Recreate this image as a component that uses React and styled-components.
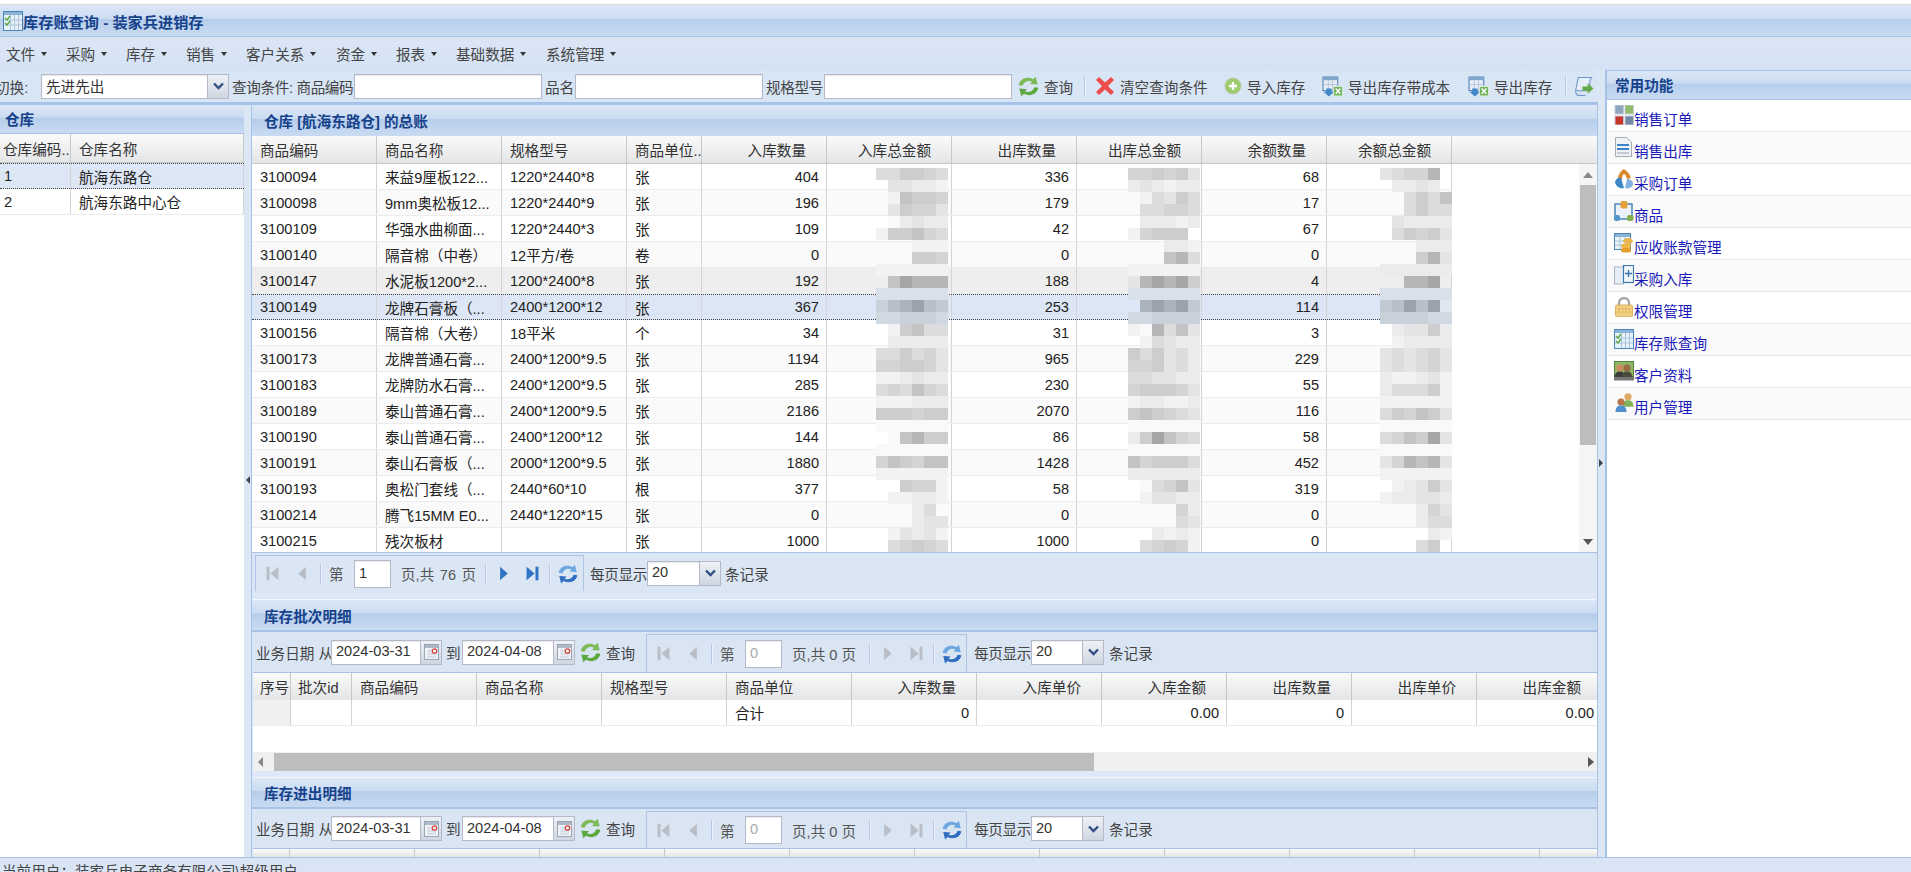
import React from 'react';
import styled, { createGlobalStyle, css } from 'styled-components';

const GlobalStyle = createGlobalStyle`
  html, body { margin: 0; padding: 0; background: #fff; overflow: hidden; }
  body {
    font-family: "Liberation Sans", "Noto Sans CJK SC", sans-serif;
    font-size: 14.6px;
    color: #333;
  }
  * { box-sizing: border-box; }
`;

// ExtJS blue theme band used by every panel title
const band = css`
  background: linear-gradient(#dbe7f6 0%, #cbdcf2 44%, #b6cdeb 46%, #c9dbf1 100%);
`;

const Page = styled.div`
  width: 1911px;
  height: 872px;
  display: flex;
  flex-direction: column;
  overflow: hidden;
`;

const TopStrip = styled.div`
  height: 5px;
  border-bottom: 1px solid #dcdcdc;
`;

const TitleBar = styled.div`
  height: 32px;
  ${band}
  border-bottom: 1px solid #a6c3e6;
  display: flex;
  align-items: center;
  padding-left: 3px;
  gap: 0;
  color: #15428b;
  font-weight: bold;
  font-size: 15.2px;
`;

const MenuBar = styled.div`
  height: 33px;
  display: flex;
  align-items: center;
  padding-left: 6px;
  background: linear-gradient(#dbe6f5, #d4e2f4);
`;

const MenuItem = styled.div`
  width: ${({ $w }) => $w}px;
  display: flex;
  align-items: center;
  color: #444;
  white-space: nowrap;
  &::after {
    content: '';
    margin-left: 6px;
    border: 3px solid transparent;
    border-top: 4px solid #333;
    border-bottom: 0;
  }
`;

const Main = styled.div`
  flex: 1;
  min-height: 0;
  display: flex;
`;

const Workspace = styled.div`
  width: 1598px;
  display: flex;
  flex-direction: column;
  min-height: 0;
`;

const TopToolbar = styled.div`
  height: 35px;
  flex: none;
  display: flex;
  align-items: center;
  padding-bottom: 3px;
  overflow: hidden;
  background: linear-gradient(#d8e5f5 0, #d8e5f5 32px, #a6c2e8 32px);
`;

const Text = styled.span`
  flex: none;
  width: ${({ $w }) => ($w ? `${$w}px` : 'auto')};
  margin-left: ${({ $ml }) => $ml || 0}px;
  color: ${({ $muted }) => ($muted ? '#555' : '#444')};
  letter-spacing: ${({ $tight }) => ($tight ? '-0.35px' : 'normal')};
  word-spacing: ${({ $ws }) => $ws || 0}px;
  white-space: nowrap;
`;

const Field = styled.div`
  flex: none;
  width: ${({ $w }) => $w}px;
  height: ${({ $h }) => $h || 25}px;
  margin-left: ${({ $ml }) => $ml || 0}px;
  display: flex;
  background: #fff;
  border: 1px solid #b5b8c8;
  box-shadow: inset 0 1px 1px #e8e8e8;
`;

const FieldInput = styled.input`
  flex: 1;
  min-width: 0;
  height: 100%;
  border: 0;
  background: transparent;
  padding: 0 0 2px 4px;
  font: inherit;
  color: ${({ disabled }) => (disabled ? '#aaa' : '#333')};
  outline: none;
`;

const Trigger = styled.div`
  flex: none;
  width: 21px;
  display: flex;
  align-items: center;
  justify-content: center;
  background: linear-gradient(#eef1f6, #cfd6e1);
  border-left: 1px solid #b5b8c8;
`;

const ToolButton = styled.div`
  flex: none;
  width: ${({ $w }) => $w}px;
  margin-left: ${({ $ml }) => $ml || 0}px;
  display: flex;
  align-items: center;
  gap: 5px;
  color: #444;
  white-space: nowrap;
`;

const Sep = styled.i`
  flex: none;
  width: 1px;
  height: ${({ $h }) => $h || 20}px;
  margin-left: ${({ $ml }) => $ml || 0}px;
  background: #b3c9e6;
  box-shadow: 1px 0 0 #eaf1fa;
`;

const Body = styled.div`
  flex: 1;
  min-height: 0;
  display: flex;
`;

const West = styled.div`
  width: 244px;
  flex: none;
  display: flex;
  flex-direction: column;
  background: #fff;
`;

const Splitter = styled.div`
  flex: none;
  width: ${({ $w }) => $w}px;
  position: relative;
  background: #dce7f6;
  border-right: ${({ $edge }) => ($edge ? '1px solid #a6c2e8' : '0')};
`;

const SplitArrow = styled.div`
  position: absolute;
  left: ${({ $left }) => $left}px;
  top: ${({ $top }) => $top}px;
  border: 4px solid transparent;
  ${({ $dir }) => ($dir === 'left'
    ? 'border-right: 4px solid #444; border-left: 0;'
    : 'border-left: 4px solid #444; border-right: 0;')}
`;

const PanelTitle = styled.div`
  flex: none;
  height: ${({ $h }) => $h}px;
  ${band}
  display: flex;
  align-items: center;
  padding-left: ${({ $pl }) => $pl}px;
  padding-bottom: ${({ $pb }) => $pb || 0}px;
  color: #15428b;
  font-weight: bold;
  border-bottom: ${({ $line }) => $line || 0}px solid #a8c2e6;
  border-top: ${({ $top }) => ($top ? '1px solid #f4f7fc' : '0')};
`;

const Center = styled.div`
  flex: 1;
  min-width: 0;
  display: flex;
  flex-direction: column;
  overflow: hidden;
  background: #dce7f6;
  border-right: 1px solid #a8c2e6;
`;

const GridHead = styled.div`
  flex: none;
  height: ${({ $h }) => $h}px;
  display: flex;
  overflow: hidden;
  background: linear-gradient(#fafafa, #e4e5e7);
  border-bottom: ${({ $flat }) => ($flat ? 0 : '1px solid #c8c8c8')};
`;

const HeadCell = styled.div`
  flex: none;
  width: ${({ $w }) => $w}px;
  display: flex;
  align-items: center;
  justify-content: ${({ $right }) => ($right ? 'flex-end' : 'flex-start')};
  padding: 0 ${({ $right }) => ($right ? 20 : 0)}px 0 ${({ $pl }) => $pl || 8}px;
  border-right: 1px solid #c8c8c8;
  white-space: nowrap;
  overflow: hidden;
  color: #333;
`;

const TableArea = styled.div`
  flex: none;
  height: 388px;
  display: flex;
  background: #fff;
`;

const Rows = styled.div`
  flex: 1;
  min-width: 0;
  position: relative;
  overflow: hidden;
`;

const Row = styled.div`
  height: 26px;
  display: flex;
  width: ${({ $w }) => ($w ? `${$w}px` : 'auto')};
  background: ${({ $state, $alt }) => {
    if ($state === 'selected') return '#dce6f5';
    if ($state === 'hover') return '#eeeeee';
    return $alt ? '#fafafa' : '#fff';
  }};
  border-bottom: ${({ $state }) => ($state === 'selected' ? '1px dotted #444' : '1px solid #ececec')};
  border-top: ${({ $state }) => ($state === 'selected' ? '1px dotted #444' : '0')};
`;

const Cell = styled.div`
  flex: none;
  width: ${({ $w }) => $w}px;
  display: flex;
  align-items: center;
  justify-content: ${({ $right }) => ($right ? 'flex-end' : 'flex-start')};
  padding: 0 ${({ $right }) => ($right ? 7 : 0)}px 0 ${({ $pl }) => $pl || 8}px;
  border-right: 1px solid #d4d4d4;
  background: ${({ $gutter }) => ($gutter ? '#f0f0f0' : 'transparent')};
  color: #222;
  white-space: nowrap;
  overflow: hidden;
`;

const MosaicSvg = styled.svg`
  position: absolute;
  top: 4px;
  left: ${({ $left }) => $left}px;
`;

const VScroll = styled.div`
  flex: none;
  width: 18px;
  display: flex;
  flex-direction: column;
  align-items: center;
  background: #f5f5f5;
`;

const ScrollEnd = styled.div`
  flex: ${({ $fill }) => ($fill ? 1 : 'none')};
  height: 21px;
  display: flex;
  align-items: ${({ $fill }) => ($fill ? 'flex-end' : 'center')};
  justify-content: center;
  padding-bottom: ${({ $fill }) => ($fill ? '7px' : 0)};
`;

const Thumb = styled.div`
  flex: none;
  width: 16px;
  height: 260px;
  background: #bdbdbd;
`;

const Triangle = styled.i`
  border: 5px solid transparent;
  ${({ $dir }) => ({
    up: 'border-bottom: 6px solid #888; border-top: 0;',
    down: 'border-top: 6px solid #555; border-bottom: 0;',
    left: 'border-right: 5px solid #888; border-left: 0;',
    right: 'border-left: 6px solid #555; border-right: 0;',
  }[$dir])}
`;

const PagerBar = styled.div`
  flex: none;
  height: 41px;
  display: flex;
  align-items: center;
  padding: 0 0 0 3px;
  border-top: 1px solid #a8c2e6;
  background: #dbe6f5;
`;

const LowerSection = styled.div`
  flex: none;
  display: flex;
  flex-direction: column;
  padding-left: 1px;
`;

const SectionGap = styled.div`
  flex: none;
  height: ${({ $h }) => $h}px;
  background: #dfe8f6;
`;

const FilterBar = styled.div`
  flex: none;
  height: ${({ $h }) => $h}px;
  display: flex;
  align-items: center;
  padding-left: 3px;
  background: #dae5f4;
  border-bottom: 1px solid #a8c2e6;
`;

const PagerBox = styled.div`
  flex: none;
  align-self: flex-end;
  width: ${({ $w }) => $w}px;
  height: ${({ $h }) => $h}px;
  margin-left: ${({ $ml }) => $ml || 0}px;
  margin-bottom: ${({ $mb }) => $mb || 0}px;
  display: flex;
  align-items: center;
  padding-left: 4px;
  border: 1px solid #aec5e3;
  border-bottom: 0;
`;

const PagerBtn = styled.div`
  flex: none;
  width: 24px;
  margin-left: ${({ $ml }) => $ml || 0}px;
  display: flex;
  justify-content: center;
`;

const EmptyRow = styled.div`
  flex: none;
  height: 26px;
  background: #fff;
`;

const HScroll = styled.div`
  flex: none;
  height: 19px;
  display: flex;
  align-items: center;
  background: #f0f0f0;
  padding: 0 3px 0 5px;
`;

const HThumb = styled.div`
  width: 820px;
  height: 18px;
  margin-left: 11px;
  margin-right: auto;
  background: #bdbdbd;
`;

const EastSplit = styled(Splitter)`
  background: #dce7f6;
`;

const East = styled.div`
  flex: 1;
  min-width: 0;
  display: flex;
  flex-direction: column;
  background: #fff;
  border-left: 2px solid #a6c2e8;
  border-top: 1px solid #a6c2e8;
`;

const EastList = styled.div`
  display: flex;
  flex-direction: column;
`;

const EastItem = styled.div`
  height: 32px;
  display: flex;
  align-items: flex-start;
  padding: 5px 0 0 7px;
  background: ${({ $alt }) => ($alt ? '#f9f9f9' : '#fff')};
  border-bottom: 1px solid #e8e8e8;
`;

const EastLabel = styled.span`
  margin-top: 5px;
  color: #1a1ab8;
  line-height: 20px;
`;

const StatusBar = styled.div`
  flex: none;
  height: 15px;
  border-top: 1px solid #a6c2e8;
  background: #d9e5f5;
  padding: 5px 0 0 2px;
  line-height: 18px;
  overflow: hidden;
  color: #444;
  white-space: nowrap;
`;

/* --- icons --- */

const Svg = ({ size = 20, h, box = '0 0 20 20', children }) => (
  <svg width={size} height={h || size} viewBox={box} style={{ flex: 'none', display: 'block' }}>
    {children}
  </svg>
);

const ChevronDown = () => (
  <svg width="11" height="8" viewBox="0 0 11 8">
    <path d="M1 1.5 L5.5 6 L10 1.5" fill="none" stroke="#2f4f86" strokeWidth="2.4" />
  </svg>
);

const CalendarIcon = () => (
  <svg width="15" height="16" viewBox="0 0 15 16">
    <rect x="0.5" y="0.5" width="14" height="15" fill="#f1f3f6" stroke="#9aa5b5" />
    <rect x="1" y="1" width="13" height="3" fill="#aeb9c8" />
    <path d="M3 7h9M3 10h9M3 13h9M5 5v9M8 5v9M11 5v9" stroke="#cdd4de" />
    <circle cx="10.5" cy="7" r="2.2" fill="#fff" stroke="#d0443c" strokeWidth="1.3" />
  </svg>
);

const RefreshGreen = () => (
  <Svg size={21} box="2.5 2 15 16">
    <path d="M2.5 9 C3.5 4 9 2 13.5 4.5 L15.5 2.5 L17 8.5 L11 8 L12.8 6.3 C9.5 5 6.5 6.5 5.5 9.5 Z" fill="#7dbb58" />
    <path d="M17.5 11 C16.5 16 11 18 6.5 15.5 L4.5 17.5 L3 11.5 L9 12 L7.2 13.7 C10.5 15 13.5 13.5 14.5 10.5 Z" fill="#5da83f" />
  </Svg>
);

const RefreshBlue = () => (
  <Svg size={20} box="2.5 2 15 16">
    <path d="M2.5 9 C3.5 4 9 2 13.5 4.5 L15.5 2.5 L17 8.5 L11 8 L12.8 6.3 C9.5 5 6.5 6.5 5.5 9.5 Z" fill="#6ea6e0" />
    <path d="M17.5 11 C16.5 16 11 18 6.5 15.5 L4.5 17.5 L3 11.5 L9 12 L7.2 13.7 C10.5 15 13.5 13.5 14.5 10.5 Z" fill="#2f6fbd" />
  </Svg>
);

const RedCross = () => (
  <Svg size={20}>
    <path d="M1 4 L4 1 L10 6.5 L16 1 L19 4 L13 10 L19 16 L16 19 L10 13.5 L4 19 L1 16 L7 10 Z" fill="#ec4d4a" />
  </Svg>
);

const GreenPlus = () => (
  <Svg size={18}>
    <circle cx="10" cy="10" r="9" fill="#9ccb6c" stroke="#c4c8b8" />
    <path d="M10 5.5 v9 M5.5 10 h9" stroke="#fff" strokeWidth="2.6" />
  </Svg>
);

const ExportIcon = () => (
  <Svg size={21}>
    <rect x="1" y="1" width="14" height="13" fill="#e9eef6" stroke="#4a7fb5" />
    <rect x="1" y="1" width="14" height="3" fill="#7fa6cf" />
    <path d="M1 8h14M6 4v10M10 4v10" stroke="#b5c8de" />
    <path d="M4 12 h5 v3 h2.5 l-5 4.5 l-5 -4.5 h2.5 Z" fill="#3f87c9" />
    <rect x="11" y="10" width="8.5" height="9" fill="#6db25a" stroke="#d8ead0" />
    <path d="M13 12 l4.5 5 M17.5 12 l-4.5 5" stroke="#fff" strokeWidth="1.4" />
  </Svg>
);

const DocArrow = () => (
  <Svg size={21}>
    <path d="M5 1.5 H17.5 L16 5 V14 H2.5 Z" fill="#e6eef8" stroke="#6f97c4" />
    <path d="M2.5 14 C2.5 17 4 18.5 6 18.5 H12" fill="#cfdff2" stroke="#6f97c4" />
    <path d="M9 10 h5 v-3 l5.5 5 l-5.5 5 v-3 h-5 Z" fill="#62ab48" />
  </Svg>
);

const PagerIcon = ({ kind, on }) => {
  const fill = on ? '#2f74c4' : '#b9bec6';
  const shape = {
    first: <><rect x="3" y="2" width="3.5" height="16" fill={fill} /><path d="M17 2 V18 L7.5 10 Z" fill={fill} /></>,
    prev: <path d="M14 2 V18 L5 10 Z" fill={fill} />,
    next: <path d="M6 2 V18 L15 10 Z" fill={fill} />,
    last: <><rect x="13.5" y="2" width="3.5" height="16" fill={fill} /><path d="M3 2 V18 L12.5 10 Z" fill={fill} /></>,
  }[kind];
  return <Svg size={17}>{shape}</Svg>;
};

const GridCheck = () => (
  <Svg>
    <rect x="0.5" y="0.5" width="19" height="19" fill="#e8f0f8" stroke="#4a86b8" />
    <rect x="1" y="1" width="18" height="3" fill="#8cb4d6" />
    <path d="M7.5 4v15M11.5 4v15M15.5 4v15M1 9h18M1 14h18" stroke="#a9c5de" />
    <path d="M2 7l2 2 3-4M2 12l2 2 3-4" fill="none" stroke="#5aa43c" strokeWidth="1.3" />
  </Svg>
);

const Person = ({ x, y, skin, shirt }) => (
  <g>
    <circle cx={x} cy={y} r="3.6" fill={skin} />
    <path d={`M${x - 5.5} ${y + 10} C${x - 5.5} ${y + 5} ${x - 3} ${y + 3.5} ${x} ${y + 3.5} C${x + 3} ${y + 3.5} ${x + 5.5} ${y + 5} ${x + 5.5} ${y + 10} Z`} fill={shirt} />
  </g>
);

const eastIcons = {
  squares: (
    <Svg>
      <rect x="1" y="0" width="8.5" height="9" fill="#8ea6c0" stroke="#c5ccd6" />
      <rect x="11" y="0" width="8.5" height="9" fill="#8fbb6a" stroke="#c5ccd6" />
      <rect x="1" y="11" width="8.5" height="9" fill="#c9332a" stroke="#c5ccd6" />
      <rect x="11" y="11" width="8.5" height="9" fill="#7189a6" stroke="#c5ccd6" />
    </Svg>
  ),
  doc: (
    <Svg>
      <path d="M1.5 0.5 H12.5 L17.5 5 V19.5 H1.5 Z" fill="#eef1f5" stroke="#a5acb8" />
      <rect x="3" y="7" width="12" height="2" fill="#3c83c9" />
      <rect x="3" y="11" width="12" height="2" fill="#3c83c9" />
      <path d="M3 16h12" stroke="#b5bac4" strokeWidth="1.5" />
    </Svg>
  ),
  cycle: (
    <Svg>
      <path d="M4 10 C4 5 7 2 10 0 C13 2 16 5 17 9 L13 10 C12 7 11 5 10 5 C9 5 8 7 8 11 Z" fill="#d98a2e" />
      <path d="M1 13 C2 9 5 8 7 9 L10 19 C6 20 2 18 1 13 Z" fill="#3f86c6" />
      <path d="M11 19 L13 10 C16 10 19 12 19 15 C19 18 15 20 11 19 Z" fill="#7fb2de" />
    </Svg>
  ),
  box: (
    <Svg>
      <rect x="1" y="3" width="17" height="15" fill="#eaf1f8" stroke="#3f7fb5" strokeWidth="1.4" />
      <rect x="6.5" y="0" width="7" height="7.5" rx="2" fill="#e5a13b" />
      <rect x="0" y="14" width="6" height="6" rx="2" fill="#4f97c9" />
      <rect x="13" y="14" width="6.5" height="6" rx="2" fill="#83ad4d" />
    </Svg>
  ),
  ledger: (
    <Svg>
      <rect x="0.5" y="0.5" width="16" height="16" fill="#eef3f8" stroke="#4a86b8" />
      <rect x="1" y="1" width="15" height="3" fill="#8cb4d6" />
      <path d="M6 4v12M11 4v12M1 8h15M1 12h15" stroke="#a9c5de" />
      <ellipse cx="14" cy="8" rx="5" ry="3" fill="#e9b44c" />
      <rect x="7" y="11" width="10" height="4" rx="2" fill="#eeb541" />
      <rect x="7" y="15" width="10" height="4.5" rx="2" fill="#e39f2c" />
    </Svg>
  ),
  panels: (
    <Svg>
      <rect x="0.5" y="2" width="9" height="17" fill="#e6edf5" stroke="#aab5c3" />
      <rect x="9.5" y="0.5" width="10" height="17" fill="#f1f6fb" stroke="#3c78b0" strokeWidth="1.2" />
      <path d="M14.5 5v7M11 8.5h7" stroke="#3c78b0" strokeWidth="1.4" />
    </Svg>
  ),
  lock: (
    <Svg>
      <path d="M5 9 V6 C5 -0.5 15 -0.5 15 6 V9" fill="none" stroke="#a7a7a7" strokeWidth="2.4" />
      <rect x="1.5" y="8" width="17" height="12" rx="1.5" fill="#f0cf80" stroke="#d8b262" />
      <path d="M4 12h12M4 15h12" stroke="#d3a443" strokeDasharray="2 1.5" />
    </Svg>
  ),
  grid: <GridCheck />,
  card: (
    <Svg>
      <rect x="0.5" y="0.5" width="19" height="15" fill="#8fb56b" stroke="#55803c" />
      <Person x={6} y={7} skin="#c98e5c" shirt="#3c3c3c" />
      <Person x={13} y={7} skin="#9a6a42" shirt="#4a4a3c" />
      <rect x="0" y="16" width="20" height="3.5" fill="#777" />
    </Svg>
  ),
  users: (
    <Svg>
      <Person x={14} y={3.8} skin="#e0a968" shirt="#7fb35c" />
      <Person x={7} y={9} skin="#b8744a" shirt="#4f8fd0" />
    </Svg>
  ),
};

/* --- data --- */

const menus = [['文件', 60], ['采购', 60], ['库存', 60], ['销售', 60], ['客户关系', 90], ['资金', 60], ['报表', 60], ['基础数据', 90], ['系统管理', 90]];

const stockColumns = [125, 125, 125, 75, 125, 125, 125, 125, 125, 125];

const stockHead = [
  ['商品编码'], ['商品名称'], ['规格型号'], ['商品单位..'],
  ['入库数量', true], ['入库总金额', true], ['出库数量', true], ['出库总金额', true], ['余额数量', true], ['余额总金额', true],
];

const stockRows = [
  ['3100094', '来益9厘板122...', '1220*2440*8', '张', 404, 336, 68],
  ['3100098', '9mm奥松板12...', '1220*2440*9', '张', 196, 179, 17],
  ['3100109', '华强水曲柳面...', '1220*2440*3', '张', 109, 42, 67],
  ['3100140', '隔音棉（中卷）', '12平方/卷', '卷', 0, 0, 0],
  ['3100147', '水泥板1200*2...', '1200*2400*8', '张', 192, 188, 4],
  ['3100149', '龙牌石膏板（...', '2400*1200*12', '张', 367, 253, 114],
  ['3100156', '隔音棉（大卷）', '18平米', '个', 34, 31, 3],
  ['3100173', '龙牌普通石膏...', '2400*1200*9.5', '张', 1194, 965, 229],
  ['3100183', '龙牌防水石膏...', '2400*1200*9.5', '张', 285, 230, 55],
  ['3100189', '泰山普通石膏...', '2400*1200*9.5', '张', 2186, 2070, 116],
  ['3100190', '泰山普通石膏...', '2400*1200*12', '张', 144, 86, 58],
  ['3100191', '泰山石膏板（...', '2000*1200*9.5', '张', 1880, 1428, 452],
  ['3100193', '奥松门套线（...', '2440*60*10', '根', 377, 58, 319],
  ['3100214', '腾飞15MM E0...', '2440*1220*15', '张', 0, 0, 0],
  ['3100215', '残次板材', '', '张', 1000, 1000, 0],
];

const batchColumns = [38, 61, 125, 125, 125, 125, 125, 125, 125, 125, 125, 125];
const batchHead = ['序号', '批次id', '商品编码', '商品名称', '规格型号', '商品单位', '入库数量', '入库单价', '入库金额', '出库数量', '出库单价', '出库金额'];
const batchTotals = ['', '', '', '', '', '合计', '0', '', '0.00', '0', '', '0.00'];
const detailColumns = [37, 125, 125, 125, 125, 125, 125, 125, 125, 125, 125, 125];

const shortcuts = [
  ['squares', '销售订单'], ['doc', '销售出库'], ['cycle', '采购订单'], ['box', '商品'], ['ledger', '应收账款管理'],
  ['panels', '采购入库'], ['lock', '权限管理'], ['grid', '库存账查询'], ['card', '客户资料'], ['users', '用户管理'],
];

// redacted amount columns: one string per 12px tile row, digit = grey level, dot = no tile
const mosaicColumns = [
  { left: 624, rows: ['553345', '.66778', '.82334', '.63446', '.97677', '833245', '...888', '...334', '888888', '.20111', '666666', '421023', '554445', '.83255', '.77777', '553546', '443346', '887677', '545245', '888777', '333433', '999999', '.92133', '999999', '423422', '888888', '..3448', '.88778', '...75.', '...766', '.86768', '.54345'] },
  { left: 876, rows: ['443436', '767877', '.85635', '.55445', '.77787', '84333.', '...778', '...215', '888888', '610103', '666666', '.10103', '554444', '891526', '.85677', '353657', '443657', '556677', '433346', '877887', '323456', '999999', '730245', '999999', '243335', '777777', '.95426', '.86677', '....47', '....56', '..7878', '.54348'] },
  { left: 1128, rows: ['65441.', '.7767.', '..5352', '..5355', '.67777', '.53436', '...777', '..9316', '777777', '..110.', '666666', '320207', '444455', '.76637', '.87777', '656546', '656546', '788768', '755538', '888888', '534236', '999999', '542306', '999999', '641216', '888888', '.87636', '877667', '...746', '...755', '....78', '...53.'] },
];

const greys = [0xa6, 0xb6, 0xc3, 0xcd, 0xd4, 0xdc, 0xe4, 0xeb, 0xf2, 0xf9];

const tileColor = (digit, k, i) => {
  const g = greys[Number(digit)];
  const warm = (k * 3 + i) % 3 === 0 ? 2 : -1;
  // tiles that fall on the selected row pick up its blue
  if (k >= 10 && k <= 12) return `rgb(${g - 12},${g - 4},${g + 6})`;
  return `rgb(${g + warm},${g},${g - warm})`;
};

const Mosaic = ({ left, rows }) => (
  <MosaicSvg $left={left} width="72" height={rows.length * 12} shapeRendering="crispEdges">
    {rows.map((row, k) => row.split('').map((d, i) => (d === '.' ? null : (
      <rect key={`${k}-${i}`} x={i * 12} y={k * 12} width="12" height="12" fill={tileColor(d, k, i)} />
    ))))}
  </MosaicSvg>
);

const Combo = ({ w, h, value, ml }) => (
  <Field $w={w} $h={h} $ml={ml}>
    <FieldInput readOnly value={value} />
    <Trigger><ChevronDown /></Trigger>
  </Field>
);

const DateField = ({ w, value, ml }) => (
  <Field $w={w} $ml={ml}>
    <FieldInput readOnly value={value} />
    <Trigger><CalendarIcon /></Trigger>
  </Field>
);

const Pager = ({ width, height, ml, mb, page, total, textWidth, ws, on }) => (
  <PagerBox $w={width} $h={height} $ml={ml} $mb={mb}>
    <PagerBtn><PagerIcon kind="first" /></PagerBtn>
    <PagerBtn $ml={6}><PagerIcon kind="prev" /></PagerBtn>
    <Sep $ml={6} />
    <Text $w={25} $ml={8} $muted>第</Text>
    <Field $w={37} $h={28}>
      <FieldInput readOnly disabled={!on} value={page} />
    </Field>
    <Text $w={textWidth} $ml={10} $ws={ws} $muted>页,共 {total} 页</Text>
    <Sep $ml={4} />
    <PagerBtn $ml={5}><PagerIcon kind="next" on={on} /></PagerBtn>
    <PagerBtn $ml={5}><PagerIcon kind="last" on={on} /></PagerBtn>
    <Sep $ml={5} />
    <PagerBtn $ml={6}><RefreshBlue /></PagerBtn>
  </PagerBox>
);

const DateFilter = ({ h }) => (
  <FilterBar $h={h}>
    <Text $w={75}>业务日期 从</Text>
    <DateField w={111} value="2024-03-31" />
    <Text $w={16} $ml={4}>到</Text>
    <DateField w={113} value="2024-04-08" />
    <ToolButton $w={56} $ml={5}><RefreshGreen />查询</ToolButton>
    <Pager width={321} height={h - 3} ml={10} page="0" total="0" textWidth={73} />
    <Text $w={57} $ml={7} $tight>每页显示</Text>
    <Combo w={73} value="20" />
    <Text $ml={5}>条记录</Text>
  </FilterBar>
);

const App = () => (
  <Page>
    <GlobalStyle />
    <TopStrip />
    <TitleBar><GridCheck />库存账查询 - 装家兵进销存</TitleBar>
    <MenuBar>
      {menus.map(([label, w]) => <MenuItem key={label} $w={w}>{label}</MenuItem>)}
    </MenuBar>
    <Main>
      <Workspace>
        <TopToolbar>
          <Text $w={46} $ml={-5}>切换:</Text>
          <Combo w={188} value="先进先出" />
          <Text $w={122} $ml={3} $tight>查询条件: 商品编码</Text>
          <Field $w={188}><FieldInput readOnly value="" /></Field>
          <Text $w={30} $ml={3}>品名</Text>
          <Field $w={188}><FieldInput readOnly value="" /></Field>
          <Text $w={58} $ml={3} $tight>规格型号</Text>
          <Field $w={188}><FieldInput readOnly value="" /></Field>
          <ToolButton $w={66} $ml={6}><RefreshGreen />查询</ToolButton>
          <Sep />
          <ToolButton $w={129} $ml={10}><RedCross />清空查询条件</ToolButton>
          <ToolButton $w={98}><GreenPlus />导入库存</ToolButton>
          <ToolButton $w={146}><ExportIcon />导出库存带成本</ToolButton>
          <ToolButton $w={97}><ExportIcon />导出库存</ToolButton>
          <Sep />
          <ToolButton $w={24} $ml={7}><DocArrow /></ToolButton>
        </TopToolbar>
        <Body>
          <West>
            <PanelTitle $h={29} $pl={5} $pb={2} $line={1}>仓库</PanelTitle>
            <GridHead $h={29}>
              <HeadCell $w={71} $pl={3}>仓库编码..</HeadCell>
              <HeadCell $w={173}>仓库名称</HeadCell>
            </GridHead>
            <Row $state="selected">
              <Cell $w={71} $pl={4}>1</Cell>
              <Cell $w={173}>航海东路仓</Cell>
            </Row>
            <Row>
              <Cell $w={71} $pl={4}>2</Cell>
              <Cell $w={173}>航海东路中心仓</Cell>
            </Row>
          </West>
          <Splitter $w={8} $edge>
            <SplitArrow $dir="left" $left={2} $top={371} />
          </Splitter>
          <Center>
            <PanelTitle $h={31} $pl={12}>仓库 [航海东路仓] 的总账</PanelTitle>
            <GridHead $h={28}>
              {stockHead.map(([label, right], i) => (
                <HeadCell key={label} $w={stockColumns[i]} $right={right}>{label}</HeadCell>
              ))}
            </GridHead>
            <TableArea>
              <Rows>
                {stockRows.map((r, i) => (
                  <Row key={r[0]} $w={1200} $alt={i % 2 === 1} $state={i === 5 ? 'selected' : i === 4 ? 'hover' : undefined}>
                    <Cell $w={125}>{r[0]}</Cell>
                    <Cell $w={125}>{r[1]}</Cell>
                    <Cell $w={125}>{r[2]}</Cell>
                    <Cell $w={75}>{r[3]}</Cell>
                    <Cell $w={125} $right>{r[4]}</Cell>
                    <Cell $w={125} />
                    <Cell $w={125} $right>{r[5]}</Cell>
                    <Cell $w={125} />
                    <Cell $w={125} $right>{r[6]}</Cell>
                    <Cell $w={125} />
                  </Row>
                ))}
                {mosaicColumns.map((col) => <Mosaic key={col.left} left={col.left} rows={col.rows} />)}
              </Rows>
              <VScroll>
                <ScrollEnd><Triangle $dir="up" /></ScrollEnd>
                <Thumb />
                <ScrollEnd $fill><Triangle $dir="down" /></ScrollEnd>
              </VScroll>
            </TableArea>
            <PagerBar>
              <Pager width={329} height={36} mb={2} page="1" total="76" textWidth={80} ws={1.5} on />
              <Text $w={57} $ml={6} $tight>每页显示</Text>
              <Combo w={74} value="20" />
              <Text $ml={4}>条记录</Text>
            </PagerBar>

            <SectionGap $h={6} />
            <PanelTitle $h={33} $pl={12} $line={2} $top>库存批次明细</PanelTitle>
            <LowerSection>
              <DateFilter h={41} />
              <GridHead $h={27} $flat>
                {batchHead.map((label, i) => (
                  <HeadCell key={label} $w={batchColumns[i]} $right={i > 5} $pl={i < 2 ? 7 : 8}>{label}</HeadCell>
                ))}
              </GridHead>
              <Row>
                {batchTotals.map((value, i) => (
                  <Cell key={i} $w={batchColumns[i]} $right={i > 5} $gutter={i === 0}>{value}</Cell>
                ))}
              </Row>
              <EmptyRow />
              <HScroll>
                <Triangle $dir="left" />
                <HThumb />
                <Triangle $dir="right" />
              </HScroll>
            </LowerSection>

            <SectionGap $h={6} />
            <PanelTitle $h={32} $pl={12} $line={2} $top>库存进出明细</PanelTitle>
            <LowerSection>
              <DateFilter h={40} />
              <GridHead $h={8} $flat>
                {detailColumns.map((w, i) => <HeadCell key={i} $w={w} />)}
              </GridHead>
            </LowerSection>
          </Center>
        </Body>
      </Workspace>
      <EastSplit $w={7}>
        <SplitArrow $dir="right" $left={1} $top={389} />
      </EastSplit>
      <East>
        <PanelTitle $h={29} $pl={8} $pb={2} $line={1}>常用功能</PanelTitle>
        <EastList>
          {shortcuts.map(([icon, label], i) => (
            <EastItem key={label} $alt={i % 2 === 1}>
              {eastIcons[icon]}
              <EastLabel>{label}</EastLabel>
            </EastItem>
          ))}
        </EastList>
      </East>
    </Main>
    <StatusBar>当前用户：装家兵电子商务有限公司\超级用户</StatusBar>
  </Page>
);

export default App;
